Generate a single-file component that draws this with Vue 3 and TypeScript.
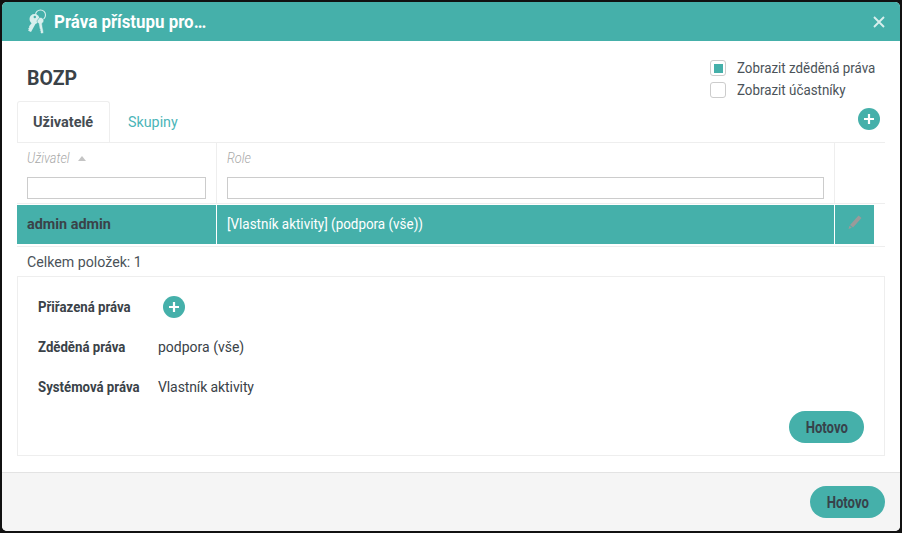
<script setup lang="ts">
const title = 'Práva přístupu pro…'
</script>

<template>
  <div class="backdrop">
    <div class="dialog">
      <header class="head">
        <svg class="keys" width="22" height="26" viewBox="0 0 22 26" fill="none">
          <circle cx="14.500" cy="6" r="5" stroke="#d8efed" stroke-width="1.100" />
          <circle cx="8.500" cy="10" r="5" fill="#d8efed" />
          <path d="M7 12.500l3 1.500-5 9-2.800-1.200.6-1.500-.6-.8 1.200-1.300-.3-1z" fill="#d8efed" />
          <circle cx="8.800" cy="8" r="1.200" fill="#45b0aa" />
          <path d="M13.500 8.500c2.200-.5 4.300 1 4.300 3 0 1.400-.7 2.400-1.800 3l1.700 9.500-2.300.8-1.300-1.800.6-.9-1-.9.500-1-.8-1-.7-4.700c-1.300-.6-1.700-1.600-1.500-2.800z" fill="#d8efed" stroke="#45b0aa" stroke-width=".6" />
        </svg>
        <span class="title">{{ title }}</span>
        <svg class="close" width="12" height="12" viewBox="0 0 12 12"><path d="M1 1l10 10M11 1L1 11" stroke="#d8efed" stroke-width="1.900" /></svg>
      </header>

      <main class="body">
        <div class="top">
          <h1 class="name">BOZP</h1>
          <div class="checks">
            <label class="check"><span class="box on"><i></i></span><span class="cond">Zobrazit zděděná práva</span></label>
            <label class="check"><span class="box"></span><span class="cond">Zobrazit účastníky</span></label>
          </div>
        </div>

        <div class="tabs">
          <div class="tab active">Uživatelé</div>
          <div class="tab">Skupiny</div>
          <button class="plus tabs-plus" type="button"><svg width="12" height="12" viewBox="0 0 12 12"><path d="M6 1v10M1 6h10" stroke="#fff" stroke-width="2.200" /></svg></button>
        </div>

        <div class="grid head-row">
          <div class="cell c1">
            <div class="th"><span class="th-text">Uživatel</span><span class="sort"></span></div>
            <input class="filter" type="text" />
          </div>
          <div class="cell c2">
            <div class="th"><span class="th-text">Role</span></div>
            <input class="filter" type="text" />
          </div>
          <div class="cell c3"></div>
        </div>

        <div class="row-wrap">
          <div class="grid data-row">
            <div class="dcell c1 user">admin admin</div>
            <div class="dcell c2 role"><span class="cond-role">[Vlastník aktivity] (podpora (vše))</span></div>
            <div class="dcell c3 edit">
              <svg width="14" height="14" viewBox="0 0 14 14"><path d="M10.500.5l3 2.500L5 12.500 2 10zM1.500 10.800l2.300 2L.5 14z" fill="#9a9a9a" /></svg>
            </div>
          </div>
        </div>

        <div class="total">Celkem položek: 1</div>

        <section class="panel">
          <div class="prow">
            <div class="plabel"><span>Přiřazená práva</span></div>
            <button class="plus" type="button"><svg width="12" height="12" viewBox="0 0 12 12"><path d="M6 1v10M1 6h10" stroke="#fff" stroke-width="2.200" /></svg></button>
          </div>
          <div class="prow">
            <div class="plabel"><span>Zděděná práva</span></div>
            <div>podpora (vše)</div>
          </div>
          <div class="prow">
            <div class="plabel"><span>Systémová práva</span></div>
            <div class="tight">Vlastník aktivity</div>
          </div>
          <div class="pfoot"><button class="done" type="button"><span>Hotovo</span></button></div>
        </section>
      </main>

      <footer class="foot"><button class="done" type="button"><span>Hotovo</span></button></footer>
    </div>
  </div>
</template>

<style>
html, body { margin: 0; background: #111; }
</style>

<style scoped>
.backdrop {
  width: 902px;
  height: 533px;
  box-sizing: border-box;
  padding: 2px;
  background: #111;
  font-family: Roboto, "Liberation Sans", sans-serif;
  font-size: 14px;
  color: #3a4248;
  overflow: hidden;
}
.dialog {
  height: 529px;
  background: #fff;
  border-radius: 5px;
  overflow: hidden;
  display: flex;
  flex-direction: column;
}
.head {
  height: 39px;
  flex: none;
  background: #45b0aa;
  display: flex;
  align-items: center;
  padding: 0 15px 0 24px;
  color: #fff;
}
.keys { flex: none; margin-right: 6px; }
.title {
  display: inline-block;
  white-space: nowrap;
  font-size: 19px;
  font-weight: 700;
  transform: scaleX(0.889);
  transform-origin: left center;
}
.close { margin-left: auto; }
.cond {
  display: inline-block;
  white-space: nowrap;
  font-size: 15px;
  transform: scaleX(0.89);
  transform-origin: left center;
}
.cond-role {
  display: inline-block;
  white-space: nowrap;
  font-size: 15px;
  transform: scaleX(0.895);
  transform-origin: left center;
}
.body { flex: 1; padding: 0 15px; min-height: 0; }
.top { display: flex; justify-content: space-between; height: 60px; }
.name {
  margin: 27px 0 0 10px;
  font-size: 19.500px;
  line-height: 22px;
  font-weight: 700;
  color: #3a4248;
}
.checks { width: 175px; flex: none; padding: 19px 0 0; box-sizing: border-box; display: flex; flex-direction: column; gap: 6px; }
.check { display: flex; align-items: center; gap: 11px; line-height: 16px; height: 16px; color: #4b5359; }
.box {
  width: 16px;
  height: 16px;
  flex: none;
  box-sizing: border-box;
  border: 1px solid #ccc;
  border-radius: 3px;
  display: flex;
  align-items: center;
  justify-content: center;
}
.box i { width: 9px; height: 9px; background: #45b0aa; display: block; }
.tabs {
  height: 41px;
  display: flex;
  position: relative;
  border-bottom: 1px solid #eee;
}
.tab {
  padding: 0 18px;
  line-height: 42px;
  color: #4bb5b8;
  font-size: 14.300px;
}
.tab.active {
  color: #454c52;
  font-size: 14.500px;
  font-weight: 700;
  border: 1px solid #eee;
  border-bottom: 0;
  border-radius: 3px 3px 0 0;
  background: #fff;
  height: 41px;
  box-sizing: border-box;
  line-height: 41px;
  padding: 0 15px;
  width: 93px;
}
.tabs-plus { position: absolute; right: 5px; top: 7px; }
.plus {
  width: 22px;
  height: 22px;
  padding: 0;
  border: 0;
  border-radius: 50%;
  background: #45b0aa;
  display: flex;
  align-items: center;
  justify-content: center;
}
.grid { display: grid; grid-template-columns: 200px 618px 50px; }
.head-row { height: 60px; border-bottom: 1px solid #eee; }
.cell { box-sizing: border-box; padding: 0 10px; }
.cell.c1, .cell.c2 { border-right: 1px solid #eee; }
.th {
  height: 34px;
  line-height: 30px;
  white-space: nowrap;
}
.th-text {
  display: inline-block;
  font-style: italic;
  font-weight: 300;
  color: #a8a8a8;
  font-size: 15px;
  transform: scaleX(0.85);
  transform-origin: left center;
}
.sort {
  display: inline-block;
  width: 0;
  height: 0;
  margin: 0 0 2px 1px;
  border: 4px solid transparent;
  border-top: 0;
  border-bottom: 5px solid #c4c4c4;
}
.filter {
  display: block;
  height: 22px;
  box-sizing: border-box;
  border: 1px solid #ccc;
  background: #fff;
  padding: 0;
  outline: 0;
}
.cell.c1 .filter { width: 179px; }
.cell.c2 .filter { width: 597px; }
.row-wrap { border-bottom: 1px solid #eee; height: 41px; padding-top: 1px; }
.data-row {
  grid-template-columns: 200px 618px 39px;
  height: 39px;
}
.dcell { background: #45b0aa; display: flex; align-items: center; padding: 0 10px; box-sizing: border-box; }
.dcell.c1, .dcell.c2 { border-right: 1px solid #fff; }
.user { font-weight: 700; font-size: 14.400px; color: #3a4248; }
.role { color: #fff; padding-bottom: 2px; }
.edit { justify-content: center; padding: 0 0 6px; }
.total { height: 29px; line-height: 31px; padding-left: 10px; font-size: 14.200px; color: #4b5359; }
.panel {
  height: 180px;
  box-sizing: border-box;
  border: 1px solid #eee;
  padding: 10px 20px 0;
}
.prow { display: flex; align-items: center; height: 40px; }
.plabel { width: 120px; font-size: 15px; font-weight: 700; color: #3a4248; white-space: nowrap; }
.plabel span { display: inline-block; transform: scaleX(0.88); transform-origin: left center; }
.prow .plus { margin-left: 5px; }
.tight { letter-spacing: -0.1px; }
.pfoot { display: flex; justify-content: flex-end; padding: 4px 0 0; }
.done {
  width: 75px;
  height: 32px;
  padding: 0;
  border: 0;
  border-radius: 16px;
  background: #45b0aa;
  color: #37424a;
  font-family: Roboto, "Liberation Sans", sans-serif;
  font-size: 16px;
  font-weight: 700;
}
.done span { display: inline-block; transform: scaleX(0.82); }
.foot {
  height: 59px;
  flex: none;
  box-sizing: border-box;
  background: #f5f5f5;
  border-top: 1px solid #e3e3e3;
  display: flex;
  justify-content: flex-end;
  align-items: flex-start;
  padding: 13px 15px 0 0;
}
</style>
